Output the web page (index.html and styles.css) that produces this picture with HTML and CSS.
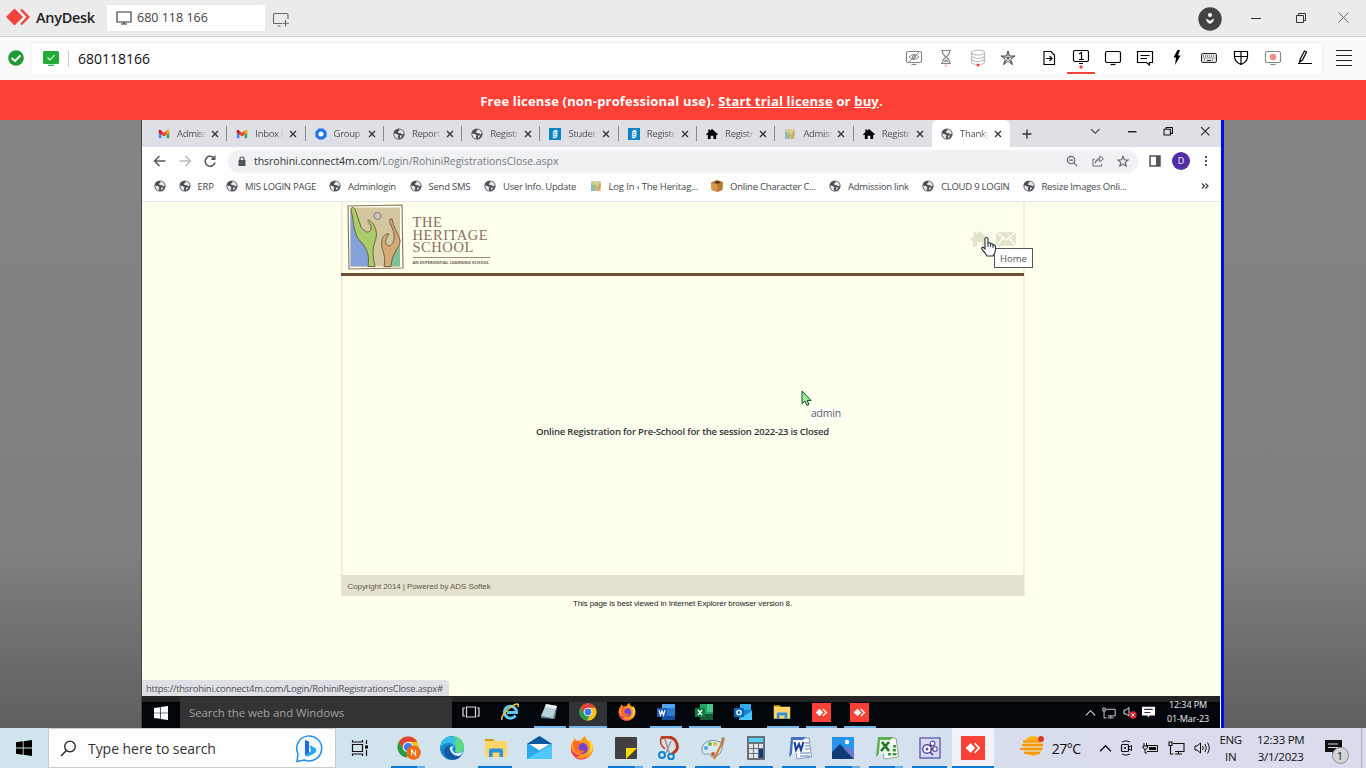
FILE: index.html
```html
<!DOCTYPE html>
<html lang="en">
<head>
<meta charset="utf-8">
<title>AnyDesk</title>
<link rel="stylesheet" href="styles.css">
</head>
<body>
<svg class="defs" width="0" height="0">
<symbol id="globe" viewBox="0 0 12 12"><circle cx="6" cy="6" r="5.600" fill="#4d5156"/><path d="M6.300 1.200C8.800 1.400 10.600 3 10.800 5.200L9.600 6.400 8 5.200 5.600 5 4.800 3.800 6.300 2.800ZM1.200 5.400 3.600 5.900 5.600 7.200 4.800 8.600 5.200 10.700C2.700 10.200 1.100 8 1.200 5.400ZM7.200 7.400 9.400 7.500 8 9.600 6.800 10.200Z" fill="#e6e8eb"/></symbol>
<symbol id="gmail" viewBox="0 0 14 11"><path d="M1 1.500V10.500H4V5Z" fill="#4285f4"/><path d="M13 1.500V10.500H10V5Z" fill="#34a853"/><path d="M1 1.200 2.500.5 7 4 11.500.5 13 1.200V4L7 8.300 1 4Z" fill="#ea4335"/><path d="M10 3 11.500.5 13 1.200V4L10 6.100Z" fill="#fbbc04"/><path d="M1 1.200 2.500.5 4 2V6.100L1 4Z" fill="#c5221f"/></symbol>
<symbol id="house" viewBox="0 0 13 12"><path d="M6.500.5 13 6.300 12 7.400 11 6.500V11.500H8V8H5V11.500H2V6.500L1 7.400 0 6.300 2.500 4V1H4.300V2.500Z"/></symbol>
<symbol id="book" viewBox="0 0 13 13"><path d="M0 0H13V13H0Z" fill="#0b83c5"/><path d="M4 4 6 2H9.500V9.500L7 11.500H4ZM5 5H8M5 7H8M5 9H8" fill="#fff" stroke="#0b83c5" stroke-width=".8"/></symbol>
<symbol id="mini" viewBox="0 0 12 12"><path d="M1 1H11V11H1Z" fill="#d9cfa0"/><path d="M1 3 4 6V11H1Z" fill="#8db6d5"/><path d="M2 1 4 5 6 4 7 7 5.500 11H4Z" fill="#9fc870"/><path d="M9 2 8.500 6 7 7 7.500 11H9L11 5Z" fill="#d7a16d"/></symbol>
<symbol id="tx" viewBox="0 0 8 8"><path d="M1 1 7 7M7 1 1 7" stroke="#33363a" stroke-width="1.400"/></symbol>
<symbol id="chrome" viewBox="0 0 24 24"><circle cx="12" cy="12" r="11.500" fill="#fbc116"/><path d="M2 6.250A11.500 11.500 0 0 1 22 6.250H12L7 15Z" fill="#db4437"/><path d="M2 6.250 7 15 12 17.800 14 17 10.500 23.400A11.500 11.500 0 0 1 2 6.250Z" fill="#269b4b"/><circle cx="12" cy="12" r="5.800" fill="#fff"/><circle cx="12" cy="12" r="4.600" fill="#3b7ded"/></symbol>
<symbol id="firefox" viewBox="0 0 24 24"><path d="M3 5C3.800 3.800 4.500 3 5 2L7 5C8.500 4 10.200 4.200 11 4.500 12 2 14 .5 15.500 0 15 3 18 4 19.500 6 20 5 20 4.500 19.800 4 22 6 23.500 10 23.200 13 22.800 19 18 23.500 12 23.500 5.500 23.500.8 18.500.8 12.500.8 9.500 1.500 7 3 5Z" fill="#ff9a1f"/><path d="M15.500 0C15 3 19 5 20 9 21 13 19 17 17 19 21 17 23 14 23 11 23 8 21 5 19.800 4 20 4.500 20 5 19.500 6 18 4 15 3 15.500 0Z" fill="#ffdc3e"/><path d="M1 11C2 16 6 19 10 19 6 23 2 19 1.200 15ZM3 19C7 23 15 24 20 19 15 25 7 25 3 19Z" fill="#f0306b"/><circle cx="12" cy="12.500" r="5.800" fill="#7542d8"/><path d="M3 5 7 5C9 6 11 7 12 8 9 8 9 9 9 10 7 13 11 16 15 14 13 19 6 19 4 13 3 10 3 7 3 5Z" fill="#ff6d25"/></symbol>
<symbol id="folder" viewBox="0 0 24 20"><path d="M1 1H9L11 3.500H1Z" fill="#d99a12"/><path d="M1 3H23V19H1Z" fill="#ffd469"/><path d="M5 19V12Q5 10.500 6.500 10.500H17.500Q19 10.500 19 12V19H15.500V14.500H8.500V19Z" fill="#2f8fdd"/></symbol>
<symbol id="any" viewBox="0 0 24 24"><path d="M0 0H24V24H0Z" fill="#fb4035"/><path d="M9.500 7.200 14.200 12 9.500 16.800 4.700 12Z" fill="#fff"/><path d="M13 7.800 14.200 6.800 19.400 12 14.200 17.200 13 16.200 17 12Z" fill="#fff"/></symbol>
<symbol id="win" viewBox="0 0 16 16"><path d="M0 2.300 6.800 1.300V7.600H0ZM7.600 1.200 16 0V7.600H7.600ZM0 8.400H6.800V14.700L0 13.700ZM7.600 8.400H16V16L7.600 14.800Z"/></symbol>
<symbol id="net" viewBox="0 0 17 14"><path d="M5 2.500H16V10.500H7M10.500 10.500V13M7 13H14M1 1H4V4.500H1ZM2.500 4.500V13H5.500" fill="none" stroke="currentColor" stroke-width="1.100"/></symbol>
<symbol id="up" viewBox="0 0 12 8"><path d="M1 6.500 6 1.500 11 6.500" fill="none" stroke="currentColor" stroke-width="1.200"/></symbol>
<symbol id="note" viewBox="0 0 17 16"><path d="M0 0H17V12H10L7.500 15V12H0Z" fill="currentColor"/></symbol>
<symbol id="mon" viewBox="0 0 18 16"><rect x="1.500" y="1.500" width="15" height="11" rx="1.500" fill="none" stroke="currentColor" stroke-width="1.200"/><path d="M6.500 14.500H11.500" stroke="currentColor" stroke-width="1.200"/></symbol>
<symbol id="oldx" viewBox="0 0 24 24"><path d="M7 2H21L23.500 21 9 23Z" fill="#fff" stroke="#8fa78f"/><path d="M13 13H16V15.500H13ZM17.500 13H21V15.500H17.500ZM13 17H16V19.500H13ZM17.500 17H21.500V19.500H17.500ZM18 9H21V11.500H18Z" fill="#3c9a3d"/><path d="M3 1H18L15 4H6L4 18 1 21Z" fill="#5cad4d"/><path d="M5 4H16L17 16 4 18Z" fill="#e9f5e6"/><path d="M7 6 14 15M14 6 6 15" stroke="#23752a" stroke-width="2.600"/></symbol>
</svg>

<header class="titlebar">
  <svg class="brand-mark" width="25" height="18" viewBox="0 0 25 18"><path d="M8.500.5 17 9 8.500 17.500 0 9Z" fill="#ef443b"/><path d="M14 2 16 1 24 9 16 17 14 16 20.500 9Z" fill="#ef443b"/></svg>
  <span class="brand">AnyDesk</span>
  <div class="session"><svg width="16" height="14" viewBox="0 0 16 14"><path d="M1 1H15V11H1ZM8 11V13M5 13H11" fill="none" stroke="#333" stroke-width="1.100"/></svg><span>680 118 166</span></div>
  <svg class="newtab" width="18" height="16" viewBox="0 0 18 16"><path d="M10 11.500H2.500Q1.500 11.500 1.500 10.500V2.500Q1.500 1.500 2.500 1.500H14.500Q16 1.500 16 3V7M5.500 14H8.500M13.500 8V14.500M10.300 11.300H16.800" fill="none" stroke="#666" stroke-width="1.100"/></svg>
  <div class="winctl">
    <svg width="24" height="24" viewBox="0 0 24 24"><circle cx="12" cy="12" r="11.700" fill="#444"/><circle cx="12" cy="8" r="2" fill="#fff"/><path d="M8 11.500Q8.500 15.500 12 17 15.500 15.500 16 11.500L12 14Z" fill="#fff"/></svg>
    <svg width="10" height="10" viewBox="0 0 10 10"><path d="M0 5.500H10" stroke="#333"/></svg>
    <svg width="10" height="10" viewBox="0 0 10 10"><path d="M.5 2.500H7.500V9.500H.5ZM2.500 2.500V.5H9.500V7.500H7.500" fill="none" stroke="#333"/></svg>
    <svg width="11" height="11" viewBox="0 0 11 11"><path d="M.5.5 10.500 10.500M10.500.5.5 10.500" stroke="#666"/></svg>
  </div>
</header>

<div class="toolbar">
  <svg class="ok" width="16" height="16" viewBox="0 0 16 16"><circle cx="8" cy="8" r="7.800" fill="#219a35"/><path d="M3.500 8 7 11 12.500 5.500" fill="none" stroke="#fff" stroke-width="2"/></svg>
  <div class="address">
    <svg width="16" height="15" viewBox="0 0 16 15"><rect width="16" height="13" rx="1.500" fill="#20ab37"/><path d="M4.500 6.500 7 9 11.500 4" fill="none" stroke="#fff" stroke-width="1.100"/><path d="M5 14.300H11" stroke="#20ab37" stroke-width="1.200"/></svg>
    <i class="bar"></i><span class="addr-text">680118166</span>
    <div class="tools">
      <span class="dim"><svg width="18" height="16" viewBox="0 0 18 16"><use href="#mon"/><path d="M4 7Q9 2 14 7 9 12 4 7ZM14.500 1.500 4 12" fill="none" stroke="currentColor"/><circle cx="9" cy="7" r="1.500" fill="none" stroke="currentColor"/></svg></span>
      <span class="dim"><svg width="14" height="18" viewBox="0 0 14 18"><path d="M2 1.500H12M2 14.500H12M3.500 2Q3 5 7 8 11 5 10.500 2M3.500 14Q3 11 7 8 11 11 10.500 14M5 13 7 11 9 13" fill="none" stroke="currentColor" stroke-width="1.200"/><circle cx="7" cy="16.500" r="1.500" fill="#fbc8c5"/></svg></span>
      <span class="faint"><svg width="16" height="18" viewBox="0 0 16 18"><g fill="none" stroke="currentColor" stroke-width="1.200"><ellipse cx="8" cy="3.500" rx="6.500" ry="2.500"/><path d="M1.500 3.500V13Q2 15.500 8 15.500T14.500 13V3.500M1.500 7Q3 9.500 8 9.500T14.500 7M1.500 10Q3 12.500 8 12.500T14.500 10"/></g><circle cx="8" cy="16" r="1.500" fill="#f33"/></svg></span>
      <span class="star"><svg width="16" height="16" viewBox="0 0 16 16"><path d="M8 1 9.800 6H15L10.900 9.200 12.500 14.500 8 11.300 3.500 14.500 5.100 9.200 1 6H6.200ZM8 1V8L15 6M8 8 12.500 14.500M8 8 3.500 14.500M8 8 1 6" fill="none" stroke="#555"/></svg></span>
      <span class="file"><svg width="14" height="16" viewBox="0 0 14 16"><path d="M2 1.500H9L12.500 5V14.500H2ZM4 8.500H10M7.500 6 10 8.500 7.500 11" fill="none" stroke="currentColor" stroke-width="1.150"/></svg></span>
      <span class="selected"><svg width="18" height="20" viewBox="0 0 18 20"><rect x="1.500" y="1.500" width="15" height="11" rx="1.500" fill="none" stroke="#000" stroke-width="1.200"/><path d="M7 5 9.500 3.500V10.500M7 10.500H12M7 14.500H11" fill="none" stroke="#000" stroke-width="1.200"/><circle cx="9" cy="18" r="1.700" fill="#ef443b"/></svg></span>
      <span><svg width="18" height="16"><use href="#mon"/></svg></span>
      <span><svg width="18" height="16" viewBox="0 0 18 16"><path d="M1.500 1.500H16.500V12.500H13.500V15L10.500 12.500H1.500ZM4.500 5.500H13.500M4.500 8.500H11" fill="none" stroke="currentColor" stroke-width="1.200"/></svg></span>
      <span><svg width="10" height="17" viewBox="0 0 10 17"><path d="M5.500 1 1.500 8.500H4L3 16 8.500 6.500H6L8 1Z"/></svg></span>
      <span><svg width="16" height="12" viewBox="0 0 16 12"><rect x=".6" y="1.600" width="14.800" height="8.800" rx="1" fill="#eee" stroke="#111"/><path d="M2 4H14M2.500 6H14M3 8H5M11 8H13" stroke="#333" stroke-dasharray="1 1"/><path d="M6 8.500H10" stroke="#222"/></svg></span>
      <span><svg width="16" height="16" viewBox="0 0 16 16"><path d="M1.500 1.500H14.500V7Q14 12 8 14.500 2 12 1.500 7ZM8 1.500V14.500M1.500 6.500H14.500" fill="none" stroke="currentColor" stroke-width="1.200"/></svg></span>
      <span class="dim"><svg width="18" height="16"><use href="#mon"/><circle cx="9" cy="7" r="3.200" fill="#f58a85"/></svg></span>
      <span><svg width="16" height="17" viewBox="0 0 16 17"><path d="M1 14.500H15M2.500 13 3.500 9.500 7.500 2 9.500 3 5.500 11Z" fill="none" stroke="currentColor" stroke-width="1.200"/></svg></span>
    </div>
  </div>
  <svg class="menu" width="16" height="17" viewBox="0 0 16 17"><path d="M0 .5H16M0 5.500H16M0 10.500H16M0 15.500H16" stroke="#222"/></svg>
</div>

<div class="banner">Free license (non-professional use). <a>Start trial license</a> or <a>buy</a>.</div>

<main class="remote">
 <section class="screen">
  <div class="tabs">
    <div class="tab"><svg><use href="#gmail"/></svg><span>Admiss</span><svg class="x"><use href="#tx"/></svg></div>
    <div class="tab"><svg><use href="#gmail"/></svg><span>Inbox (</span><svg class="x"><use href="#tx"/></svg></div>
    <div class="tab"><svg viewBox="0 0 13 13"><path d="M4 .5H9L12.500 4V9L9 12.500H4L.5 9V4Z" fill="#1a73e8"/><circle cx="6.500" cy="6.500" r="2.800" fill="#fff"/></svg><span>Group</span><svg class="x"><use href="#tx"/></svg></div>
    <div class="tab"><svg><use href="#globe"/></svg><span>Report</span><svg class="x"><use href="#tx"/></svg></div>
    <div class="tab"><svg><use href="#globe"/></svg><span>Registr</span><svg class="x"><use href="#tx"/></svg></div>
    <div class="tab"><svg><use href="#book"/></svg><span>Studen</span><svg class="x"><use href="#tx"/></svg></div>
    <div class="tab"><svg><use href="#book"/></svg><span>Registr</span><svg class="x"><use href="#tx"/></svg></div>
    <div class="tab"><svg><use href="#house"/></svg><span>Registr</span><svg class="x"><use href="#tx"/></svg></div>
    <div class="tab"><svg><use href="#mini"/></svg><span>Admiss</span><svg class="x"><use href="#tx"/></svg></div>
    <div class="tab last"><svg><use href="#house"/></svg><span>Registr</span><svg class="x"><use href="#tx"/></svg></div>
    <div class="tab active"><svg><use href="#globe"/></svg><span>Thanky</span><svg class="x"><use href="#tx"/></svg></div>
    <svg class="plus" viewBox="0 0 10 10"><path d="M5 .5V9.500M.5 5H9.500" stroke="#333" stroke-width="1.400"/></svg>
    <div class="chromectl">
      <svg viewBox="0 0 10 10"><path d="M1 3 5 7 9 3" fill="none" stroke="#333"/></svg>
      <svg viewBox="0 0 10 10"><path d="M1 5.500H9" stroke="#000" stroke-width="1.200"/></svg>
      <svg viewBox="0 0 10 10"><path d="M1 3H7V8.500H1ZM3 3V1.500H9V7H7" fill="none" stroke="#111" stroke-width="1"/></svg>
      <svg viewBox="0 0 10 10"><path d="M1 1 9 9M9 1 1 9" stroke="#222"/></svg>
    </div>
  </div>
  <div class="urlbar">
    <svg viewBox="0 0 14 14"><path d="M12.500 7H2M6.500 2 1.500 7 6.500 12" fill="none" stroke="#55585c" stroke-width="1.500"/></svg>
    <svg viewBox="0 0 14 14"><path d="M1.500 7H12M7.500 2 12.500 7 7.500 12" fill="none" stroke="#b8babd" stroke-width="1.500"/></svg>
    <svg viewBox="0 0 14 14"><path d="M11.200 4.200A5 5 0 1 0 12 8.500" fill="none" stroke="#55585c" stroke-width="1.600"/><path d="M12.500 1V6H7.500Z" fill="#55585c"/></svg>
    <div class="omni">
      <svg width="8" height="10" viewBox="0 0 8 10"><path d="M.5 4H7.500V10H.5Z" fill="#505357"/><path d="M2 4V2.500Q2 1 4 1T6 2.500V4" fill="none" stroke="#505357" stroke-width="1.200"/></svg>
      <span class="url"><b>thsrohini.connect4m.com</b>/Login/RohiniRegistrationsClose.aspx</span>
      <div class="omni-icons">
      <svg viewBox="0 0 13 13"><circle cx="5.500" cy="5.500" r="4" fill="none" stroke="#5f6368" stroke-width="1.200"/><path d="M8.500 8.500 12 12M3.500 5.500H7.500" stroke="#5f6368" stroke-width="1.300"/></svg>
      <svg viewBox="0 0 13 13"><path d="M3 4.500H1V12H10.500V9.500M3.500 9Q4 5 8.500 5V7.500L12.500 4 8.500 1V3.500Q4 4 3.500 9Z" fill="none" stroke="#5f6368"/></svg>
      <svg viewBox="0 0 13 13"><path d="M6.500 1.500 8 5.200 12 5.500 9 8 10 12 6.500 9.800 3 12 4 8 1 5.500 5 5.200Z" fill="none" stroke="#5f6368" stroke-width="1.200"/></svg>
      </div>
    </div>
    <div class="ext">
    <svg width="12" height="12" viewBox="0 0 12 12"><path d="M1 1H11V11H1Z" fill="none" stroke="#505357" stroke-width="1.500"/><path d="M7 1H11V11H7Z" fill="#505357"/></svg>
    <span class="avatar">D</span>
    <svg width="4" height="12" viewBox="0 0 4 12"><path d="M1 1H3V3H1ZM1 5H3V7H1ZM1 9H3V11H1Z" fill="#505357"/></svg>
    </div>
  </div>
  <nav class="bookmarks">
    <span class="bm w0"><svg><use href="#globe"/></svg></span>
    <span class="bm w1"><svg><use href="#globe"/></svg>ERP</span>
    <span class="bm w2"><svg><use href="#globe"/></svg>MIS LOGIN PAGE</span>
    <span class="bm w3"><svg><use href="#globe"/></svg>Adminlogin</span>
    <span class="bm w4"><svg><use href="#globe"/></svg>Send SMS</span>
    <span class="bm w5"><svg><use href="#globe"/></svg>User Info. Update</span>
    <span class="bm w6"><svg><use href="#mini"/></svg>Log In ‹ The Heritag...</span>
    <span class="bm w7"><svg viewBox="0 0 12 12"><path d="M0 2.500 6 0 12 2 11.500 10 6.500 12 .5 10Z" fill="#b77a34"/><path d="M0 2.500 6.500 4.500 6.500 12 .5 10Z" fill="#d79a4d"/><path d="M3 2.300 6.500 1 10 2.200 6.500 3.700Z" fill="#553012"/></svg>Online Character C...</span>
    <span class="bm w8"><svg><use href="#globe"/></svg>Admission link</span>
    <span class="bm w9"><svg><use href="#globe"/></svg>CLOUD 9 LOGIN</span>
    <span class="bm w10"><svg><use href="#globe"/></svg>Resize Images Onli...</span>
    <svg class="more" viewBox="0 0 8 8"><path d="M1 1.500 3.500 4 1 6.500M4.500 1.500 7 4 4.500 6.500" fill="none" stroke="#333" stroke-width="1.100"/></svg>
  </nav>
  <div class="page">
    <div class="sheet">
      <div class="head">
        <svg width="57" height="66" viewBox="0 0 57 66"><path d="M1 2 55 1 56 64 2 65Z" fill="#fffef0" stroke="#8b7058" stroke-width="1.100"/><path d="M3.500 3.500H53V62.500H3.500Z" fill="#d3c7a0"/><path d="M3.500 5 14 36 21 44V62.500H3.500Z" fill="#84a1d9"/><path d="M53 41 43 52 44 62.500H53Z" fill="#82c098"/><path d="M4 6C4 2 8 3 9 8L14 23C18 29 24 30 24 24 25 21 20 18 21 16 26 17 31 27 29 34 27 42 24 45 28 62.500H21C23 50 19 43 13 37 6 30 7 16 4 6Z" fill="#a9cd6b" stroke="#765f3e"/><path d="M45 15C46 22 51 30 53 36 54 43 45 47 44 62.500H37C40 50 33 46 35 36 36 32 39 29 42 30 37 36 38 41 42 42 46 41 48 36 47 30 46 23 41 18 43 15Z" fill="#d4aa76" stroke="#765f3e"/><circle cx="30.500" cy="12" r="3.500" fill="#c5c5c8" stroke="#8c7c70"/></svg>
        <div class="school"><div>THE</div><div>HERITAGE</div><div>SCHOOL</div><small>AN EXPERIENTIAL LEARNING SCHOOL</small></div>
        <div class="links">
          <svg width="19" height="18" viewBox="0 0 13 12"><use href="#house" fill="#e4e3d0"/></svg>
          <svg width="20" height="14" viewBox="0 0 20 14"><path d="M0 0H20V14H0Z" fill="#e4e3d0"/><path d="M0 0 10 8 20 0M0 14 7 6M20 14 13 6" fill="none" stroke="#fffff0" stroke-width="1.300"/></svg>
        </div>
      </div>
      <div class="body">Online Registration for Pre-School for the session 2022-23 is Closed</div>
      <div class="foot">Copyright 2014 | Powered by ADS Softek</div>
    </div>
    <p class="best">This page is best viewed in Internet Explorer browser version 8.</p>
    <span class="tip">Home</span>
    <svg class="hand" width="16" height="21" viewBox="0 0 16 21"><path d="M4 13V2.500Q5.500 0 7 2.500V7Q9 6 9.500 8 11.500 7 12 9 14 8.500 14.500 10.500V14Q14 18 12 20H6Q4.500 17 1 13.500 0 11 2.500 11.500Z" fill="#fff" stroke="#25333c" stroke-width="1.100"/><path d="M7 7V11M9.500 8V11M12 9V12" stroke="#25333c"/></svg>
    <svg class="arrow" width="12" height="17" viewBox="0 0 12 17"><path d="M1 1V13.500L4 11 6 15.500 8 14.500 6.200 10.500H10Z" fill="#9bf09b" stroke="#174c2a"/></svg>
    <span class="admin">admin</span>
    <span class="status">https://thsrohini.connect4m.com/Login/RohiniRegistrationsClose.aspx#</span>
  </div>
  <div class="rtask">
    <div class="rstart"><svg width="14" height="14" fill="#fff"><use href="#win"/></svg></div>
    <div class="rsearch">Search the web and Windows</div>
    <div class="rapps">
      <span><svg viewBox="0 0 18 18"><path d="M4.500 4H13.500V14H4.500ZM3 5H1V13H3M15 5H17V13H15" fill="none" stroke="#ddd" stroke-width="1.200"/></svg></span>
      <span><svg viewBox="0 0 18 18"><path d="M14.500 12.500A6 6 0 1 1 15.500 9.500H6" fill="none" stroke="#5cc8f5" stroke-width="3"/><path d="M1 17C-1 13 10 2 16 1 18 1 17.500 3 17 4" fill="none" stroke="#eec43b" stroke-width="1.500"/></svg></span>
      <span class="on"><svg viewBox="0 0 18 18"><path d="M6 1 17 3 13 16 1 13Z" fill="#b5d3d9"/><path d="M6 1 17 3 16 6 5 4Z" fill="#e7eef0"/><path d="M17 3 15 16 1 15 1 13 13 15Z" fill="#67858c"/></svg></span>
      <span class="on full"><svg><use href="#chrome"/></svg></span>
      <span><svg><use href="#firefox"/></svg></span>
      <span class="on"><svg viewBox="0 0 18 18"><path d="M5 1H18V17H5Z" fill="#2b7cd3"/><path d="M5 1H18V5H5Z" fill="#55a5ed"/><path d="M5 13H18V17H5Z" fill="#174a9c"/><path d="M0 5H10V14H0Z" fill="#1c58b8"/><path d="M2 7 3.500 12 5 8 6.500 12 8 7" fill="none" stroke="#fff" stroke-width="1.200"/></svg></span>
      <span class="on"><svg viewBox="0 0 18 18"><path d="M5 1H18V17H5Z" fill="#21a366"/><path d="M12 1H18V9H12Z" fill="#4bc58a"/><path d="M5 11H18V17H5Z" fill="#185c37"/><path d="M0 5H10V14H0Z" fill="#107c41"/><path d="M3 7 7 12M7 7 3 12" stroke="#fff" stroke-width="1.300"/></svg></span>
      <span><svg viewBox="0 0 18 18"><path d="M6 1H17V9H6Z" fill="#32a9e9"/><path d="M5 7H18V17H5Z" fill="#1685d5"/><path d="M5 16 18 8V17H5Z" fill="#48c6f5"/><path d="M0 5H10V14H0Z" fill="#0969b9"/><circle cx="5" cy="9.500" r="2.200" fill="none" stroke="#fff" stroke-width="1.300"/></svg></span>
      <span class="on"><svg><use href="#folder"/></svg></span>
      <span class="on"><svg class="big"><use href="#any"/></svg></span>
      <span class="on"><svg class="big"><use href="#any"/></svg></span>
    </div>
    <div class="rtray">
      <svg width="11" height="8"><use href="#up"/></svg>
      <svg width="14" height="12"><use href="#net"/></svg>
      <svg width="14" height="13" viewBox="0 0 14 13"><path d="M1 4H3L6 1.500V10L3 8H1Z" fill="none" stroke="#ddd"/><circle cx="10" cy="9" r="3.700" fill="#d8252e"/><path d="M8.500 7.500 11.500 10.500M11.500 7.500 8.500 10.500" stroke="#fff"/></svg>
      <svg width="13" height="13" viewBox="0 0 17 16"><use href="#note" color="#fff"/><path d="M3 4H14M3 8H11" stroke="#333" stroke-width="1.500"/></svg>
    </div>
    <div class="rclock">12:34 PM<br>01-Mar-23</div>
  </div>
 </section>
</main>

<footer class="taskbar">
  <div class="start"><svg width="16" height="16"><use href="#win"/></svg></div>
  <div class="search"><svg width="17" height="17" viewBox="0 0 17 17"><circle cx="10" cy="6.500" r="5.300" fill="none" stroke="#222" stroke-width="1.300"/><path d="M6.300 10.500 1 16" stroke="#222" stroke-width="1.300"/></svg><span>Type here to search</span>
    <svg class="bing" width="29" height="29" viewBox="0 0 29 29"><path d="M2 27.500 3 20A12.500 12.500 0 1 1 9.500 26Z" fill="#f5faff" stroke="#258ee0" stroke-width="1.500"/><path d="M10 6 14 7.500V19L10 21.500Z" fill="#1a6bea"/><path d="M14.500 11 21 14.500Q22 18 19 19.500L13 22.500 10 21.500 16 17Z" fill="#28a6ee"/></svg></div>
  <div class="view"><svg width="18" height="18" viewBox="0 0 18 18"><path d="M1.500 5.500H11.500V12.500H1.500ZM1.500 1V3H11.500V1M1.500 17V15H11.500V17M15.500 1V5M15.500 11V17" fill="none" stroke="#111" stroke-width="1.200"/><path d="M14 6.500H17V9.500H14Z"/></svg></div>
  <div class="apps">
    <span class="on part"><svg viewBox="0 0 26 26"><use href="#chrome" width="24" height="24"/><circle cx="18" cy="18" r="7.800" fill="#ef6c13"/><path d="M15.800 21V15L20.200 21V15" fill="none" stroke="#fff" stroke-width="1.100"/></svg></span>
    <span><svg viewBox="0 0 24 24"><circle cx="12" cy="12" r="12" fill="#1687cf"/><path d="M1 8C4-2 20-2 23.500 9 25 15 19 18 15 16 17 11 13 7 8 7 4 7 1 10 0 13Z" fill="#37bde5"/><path d="M12 0C20 0 25 7 24 12 23 17 18 17 15 16 17 12 16 9 14 8 18 4 14 1 12 0Z" fill="#5edc83"/><path d="M10 9C8 13 11 20 21 20 17 25 9 25 5 20 2 15 5 10 10 9Z" fill="#1459a4"/><path d="M15 10C12 11 11 14 15 17 18 18 22 16 23 15 22 18 21 19 19 20 13 20 9 15 10 11Z" fill="#e1edf4"/></svg></span>
    <span class="on"><svg><use href="#folder"/></svg></span>
    <span><svg class="wide" viewBox="0 0 25 24"><path d="M0 8 12.500 0 25 8V23H0Z" fill="#29a8ec"/><path d="M0 23 25 8V23Z" fill="#50c9fa"/><path d="M0 8 12.500 0 25 8Z" fill="#0c579e"/><path d="M2.500 8H22.500L12.500 14.500Z" fill="#fff"/></svg></span>
    <span><svg><use href="#firefox"/></svg></span>
    <span class="on part"><svg viewBox="0 0 24 24"><rect x="1" y="1" width="22" height="22" rx="1" fill="#414141"/><path d="M12 12H23L12 23Z" fill="#ffda00"/></svg></span>
    <span class="on"><svg viewBox="0 0 24 24"><path d="M4 1 18 3Q24 12 16 18L11 15 5 9Z" fill="#dae1e3"/><path d="M4 2Q13-1 18 4 24 13 15 18" fill="none" stroke="#bd3a20" stroke-width="3"/><path d="M4 2Q2 8 8 13" fill="none" stroke="#bd3a20" stroke-width="1.500"/><path d="M8 3 12 17M14 5 9 17" stroke="#8e989c" stroke-width="1.500"/><circle cx="5" cy="19" r="3" fill="none" stroke="#1781c9" stroke-width="2"/><circle cx="14" cy="20.500" r="2.800" fill="none" stroke="#1781c9" stroke-width="2"/></svg></span>
    <span class="on"><svg viewBox="0 0 24 24"><path d="M1 15C0 6 10 2 19 6 24 10 20 20 13 21 8 22 10 16 6 18 3 19 2 18 1 15Z" fill="#d8e9ef" stroke="#77939e"/><circle cx="5" cy="12" r="2" fill="#47a7dc"/><circle cx="9" cy="8" r="2" fill="#68b64a"/><circle cx="14" cy="8" r="2" fill="#e6c22c"/><circle cx="12" cy="18" r="2" fill="#d55043"/><path d="M13 23 20 9" stroke="#d67a24" stroke-width="2"/><path d="M19 9 21 1 24 2 22 10Z" fill="#b78655"/></svg></span>
    <span class="on"><svg viewBox="0 0 24 24"><path d="M3 0H21V24H3Z" fill="#68717a"/><path d="M5 2H19V6H5Z" fill="#55d2fa"/><path d="M5 8H9V12H5ZM10 8H14V12H10ZM15 8H19V12H15ZM5 13H9V17H5ZM10 13H14V17H10ZM5 18H9V22H5ZM10 18H14V22H10Z" fill="#e1e5e8"/><path d="M15 13H19V22H15Z" fill="#123c78"/></svg></span>
    <span class="on"><svg viewBox="0 0 24 24"><path d="M7 2H21L23.500 21 9 23Z" fill="#fff" stroke="#8394bb"/><path d="M17 7H21M17 10H21.500M17 13H21.500M12 17H22M12 20H22" stroke="#5573b5" stroke-width="1.200"/><path d="M3 1H18L15 4H6L4 18 1 21Z" fill="#4a72bb"/><path d="M5 4H16L17 16 4 18Z" fill="#edf2fb"/><path d="M6.500 6 8 14 11 8 13 14 15.500 6" fill="none" stroke="#1b3e94" stroke-width="2"/></svg></span>
    <span class="on part"><svg viewBox="0 0 24 24"><path d="M1 1H23V23H1Z" fill="#2795ed"/><path d="M1 16 9 8 23 23H1Z" fill="#123c78"/><path d="M13 13 17 10 23 15V23Z" fill="#6a79d5"/><circle cx="16" cy="6" r="2.200" fill="#fff"/></svg></span>
    <span class="on part"><svg><use href="#oldx"/></svg></span>
    <span class="on"><svg viewBox="0 0 24 24"><path d="M2 2H22V22H2Z" fill="#d9d9f1" stroke="#6a66b5" stroke-width="1.500"/><circle cx="9" cy="13" r="4.300" fill="#fff" stroke="#5650a9" stroke-width="1.600"/><circle cx="9" cy="13" r="1.500" fill="#5650a9"/><circle cx="14.500" cy="7.500" r="2.300" fill="#fff" stroke="#5c57ad" stroke-width="1.300"/><circle cx="17" cy="13" r="2.300" fill="#fff" stroke="#5c57ad" stroke-width="1.300"/><path d="M12 10 13.500 9M13 13H15M12 16 15 19" stroke="#443a8c" stroke-width="1.500"/></svg></span>
    <span class="on current"><svg><use href="#any"/></svg></span>
  </div>
  <div class="weather"><svg width="25" height="23" viewBox="0 0 25 23"><circle cx="13" cy="11" r="10" fill="#ffb319"/><path d="M2 8H22M1 12H23M3 16H21" stroke="#d9e0ed" stroke-width="1"/><path d="M3 6.500H20M2 10H23M0 14H22M4 18H20" stroke="#f7960c" stroke-width="2"/><circle cx="21" cy="4" r="3" fill="#d83b2d"/></svg><span>27°C</span></div>
  <div class="tray">
    <svg width="13" height="9"><use href="#up"/></svg>
    <svg width="13" height="16" viewBox="0 0 13 16"><rect x="1.500" y="4.500" width="7" height="7" rx="1" fill="none" stroke="#111" stroke-width="1.200"/><path d="M9 7 11.500 5.500V10.500L9 9M2 2Q6-.5 10 2M2 14Q6 16.500 10 14" fill="none" stroke="#111"/><circle cx="5" cy="8" r="1"/></svg>
    <svg width="17" height="12" viewBox="0 0 17 12"><path d="M5 3.500H15.500V9.500H5M2 1V4M4.500 1V4M1 4H5.500V6Q3 9 1 6ZM3 7V11H5" fill="none" stroke="#111"/><path d="M7 5H14V8H7Z"/></svg>
    <svg width="17" height="14"><use href="#net"/></svg>
    <svg width="17" height="14" viewBox="0 0 17 14"><path d="M1 5H3L6.500 2V12L3 9H1ZM8.500 5Q10 7 8.500 9M11 3Q13.500 7 11 11M13.500 1.500Q17 7 13.500 12.500" fill="none" stroke="#111"/></svg>
  </div>
  <div class="lang">ENG<br>IN</div>
  <div class="clock">12:33 PM<br>3/1/2023</div>
  <div class="notif"><svg width="24" height="25" viewBox="0 0 24 25"><use href="#note" width="17" height="16"/><path d="M3 4H13M3 7.500H13" stroke="#dde" stroke-width="1.200"/><circle cx="15.500" cy="15.500" r="8" fill="#d3d3d8" stroke="#8b8b90"/></svg><b>1</b></div>
</footer>
</body>
</html>
```
FILE: styles.css
```css
* { box-sizing: border-box; }
body { margin: 0; width: 1366px; height: 768px; overflow: hidden; font-family: "Open Sans", "Noto Sans", sans-serif; color: #222; display: flex; flex-direction: column; }
svg { display: block; flex: none; }
.defs { position: absolute; }

.titlebar { height: 37px; background: #ebebeb; border-bottom: 1px solid #d0d0d0; display: flex; align-items: center; padding-left: 6px; }
.brand { width: 71px; margin: -2px 0 0 5px; font-size: 14.500px; font-weight: 600; letter-spacing: -.3px; white-space: nowrap; }
.brand-mark { margin-bottom: 2px; }
.session { width: 158px; height: 26px; border-radius: 2px; background: #fff; display: flex; align-items: center; padding-left: 9px; gap: 5px; font-size: 12.500px; color: #444; }
.session span { margin-top: -2px; }
.newtab { margin: 3px 0 0 7px; }
.winctl { margin-left: auto; display: flex; align-items: center; padding-right: 17px; }
.winctl svg + svg { margin: -1px 0 0 34px; }
.winctl svg:first-child { margin-top: 2px; }
.winctl svg:nth-child(2) { margin-left: 29px; }
.winctl svg:nth-child(3) { margin-left: 35px; }
.winctl svg:nth-child(4) { margin-left: 32px; }

.toolbar { height: 43px; background: #fafafa; display: flex; align-items: center; padding-left: 8px; }
.ok { margin-top: -1px; }
.address { margin-left: 8px; width: 1290px; height: 32px; background: #fff; box-shadow: 0 0 0 1.500px #f4f4f4; display: flex; align-items: center; padding-left: 11px; border-radius: 2px; }
.bar { width: 1px; height: 16px; background: #ccc; margin: 0 9px 0 9px; }
.addr-text { font-size: 14px; letter-spacing: 0; color: #111; }
.tools { margin-left: auto; margin-right: 1px; display: flex; align-items: center; color: #000; height: 32px; }
.tools span { width: 32px; height: 32px; display: flex; align-items: center; justify-content: center; padding-bottom: 2px; }
.tools .dim { color: #888; }
.tools .faint { color: #bbb; }
.tools .star { width: 28px; }
.tools .file { margin-left: 11px; }
.tools .selected { border-bottom: 2px solid #ef443b; width: 28px; margin: -1px 2px 0; padding: 4px 0 0; }
.menu { margin-left: 14px; }

.banner { height: 40px; background: #fe4137; color: #fff; font-weight: 700; font-size: 13px; line-height: 42px; text-align: center; letter-spacing: .175px; padding-right: 3px; }
.banner a { text-decoration: underline; }

.remote { height: 608px; background: linear-gradient(#858585, #808080 70%, #5f5f5f); padding-left: 141px; }
.screen { width: 1083px; height: 608px; border-left: 1px solid #444; border-right: 3px solid #0808f0; display: flex; flex-direction: column; background: #fff; }
.tabs { height: 27px; background: #dee0e6; display: flex; padding-left: 7px; }
.tab { width: 78.300px; flex: none; display: flex; align-items: center; padding-left: 9px; position: relative; font-size: 9.500px; color: #505358; border-radius: 6px 6px 0 0; letter-spacing: -.3px; }
.tab::after { content: ""; position: absolute; right: 0; top: 6px; width: 1px; height: 15px; background: #85878c; }
.tab.active::after, .tab.last::after { display: none; }
.tab svg { width: 12px; height: 12px; }
.tab span { width: 29px; margin: -1px 5px 0 7px; overflow: hidden; white-space: nowrap; -webkit-mask-image: linear-gradient(90deg, #000 75%, transparent); mask-image: linear-gradient(90deg, #000 75%, transparent); }
.tab .x { width: 8px; height: 8px; }
.tab.active { background: #fff; }
.plus { width: 10px; height: 10px; margin: 9px 0 0 12px; }
.chromectl { margin-left: auto; display: flex; gap: 26px; padding: 6px 11px 0 0; }
.chromectl svg { width: 10.500px; height: 10.500px; }

.urlbar { height: 29px; display: flex; align-items: center; padding: 0 0 1px 11px; gap: 11px; }
.urlbar > svg { width: 14px; height: 14px; }
.omni { width: 910px; height: 23px; border-radius: 12px; background: #eff1f3; display: flex; align-items: center; padding-left: 10px; }
.url { margin-left: 8px; font-size: 10.500px; color: #777a7f; letter-spacing: -.03px; white-space: nowrap; }
.url b { color: #303236; font-weight: 400; }
.omni-icons { margin-left: auto; display: flex; gap: 13.500px; padding-right: 9px; }
.omni-icons svg { width: 12px; height: 12px; }
.ext { display: flex; align-items: center; gap: 11px; }
.avatar { width: 18px; height: 18px; border-radius: 50%; background: #512da8; color: #fff; font-size: 9px; line-height: 18px; text-align: center; }
.ext svg:last-child { margin-left: 3px; }

.bookmarks { height: 26px; border-bottom: 1px solid #e5e5e2; display: flex; align-items: center; padding: 0 0 5px 11.500px; }
.bm { display: flex; align-items: center; gap: 7px; font-size: 9.500px; color: #45484c; white-space: nowrap; letter-spacing: -.24px; flex: none; }
.bm svg { width: 12px; height: 12px; }
.w0 { width: 25px; } .w1 { width: 47.500px; } .w2 { width: 103px; } .w3 { width: 80.500px; } .w4 { width: 74.500px; } .w5 { width: 105.500px; letter-spacing: -.29px; } .w6 { width: 121.500px; letter-spacing: -.16px; } .w7 { width: 118px; } .w8 { width: 93px; } .w9 { width: 100.500px; } .w10 { width: 105px; }
.more { width: 8px; height: 8px; margin-left: auto; margin-right: 12px; }

.page { height: 494px; background: #ffffee; position: relative; }
.sheet { width: 684px; margin-left: 198.500px; border: solid #efeed6; border-width: 0 2px; }
.head { height: 74px; border-bottom: 3px solid #6a5035; display: flex; padding: 2px 6px 0 6px; margin-left: -2px; margin-right: -1px; }
.school { margin-left: 9px; padding-top: 12px; font-family: "Liberation Serif", serif; font-size: 14.500px; line-height: 12.700px; color: #876f60; }
.school div { letter-spacing: .55px; }
.school small { display: block; width: 77px; border-top: 1px solid #a08b7a; margin-top: 3px; font: 700 4.150px/9px "Open Sans", sans-serif; white-space: nowrap; color: #6c6056; }
.links { margin-left: auto; display: flex; align-items: center; gap: 7px; padding: 0 2px 0 0; }
.body { height: 299px; display: flex; align-items: center; justify-content: center; font-size: 9.500px; font-weight: 600; padding-top: 11px; color: #333; white-space: nowrap; letter-spacing: -.19px; }
.foot { height: 21px; margin-left: -2px; margin-right: -1px; background: #e4e2cf; font: 8px/23px "Liberation Sans", sans-serif; padding-left: 7px; color: #635a48; letter-spacing: -.08px; }
.best { margin: 3px 0 0; width: 1081px; text-align: center; font: 8px/10px "Liberation Sans", sans-serif; color: #222; letter-spacing: -.09px; }
.tip { position: absolute; left: 852px; top: 46px; width: 39px; height: 20px; border: 1px solid #555; background: #fff; font-size: 9.500px; line-height: 19px; text-align: center; color: #555; }
.hand { position: absolute; left: 839px; top: 34px; }
.arrow { position: absolute; left: 659px; top: 188px; }
.admin { position: absolute; left: 668px; top: 205px; width: 32px; height: 13px; background: #fffffa; font-size: 10.500px; line-height: 13px; color: #635d70; padding-left: 1px; letter-spacing: -.25px; }
.status { position: absolute; left: 0; bottom: -1px; width: 307px; height: 17px; background: #dee0e6; border-radius: 0 4px 0 0; font-size: 9.500px; line-height: 17px; padding-left: 4px; white-space: nowrap; color: #505358; letter-spacing: -.275px; }

.rtask { height: 32px; background: #03060b; border-top: 6px solid #262424; display: flex; margin-right: 1px; color: #ddd; position: relative; }
.rstart { width: 38px; display: flex; align-items: center; justify-content: center; padding-bottom: 5px; }
.rsearch { width: 272px; margin-top: -5px; background: #333; font-size: 11.500px; line-height: 31px; padding-left: 9px; color: #a0a0a0; letter-spacing: -.1px; }
.rapps { display: flex; }
.rapps span { width: 38.850px; display: flex; align-items: center; justify-content: center; position: relative; height: 26px; padding-bottom: 6px; }
.rapps svg { width: 18px; height: 18px; }
.rapps svg.big { width: 19px; height: 19px; }
.rapps .on::after { content: ""; position: absolute; bottom: 0; left: 4px; right: 3px; height: 2px; background: #76b5e5; }
.rapps .full { background: #303338; }
.rapps .full::after { left: 0; right: 0; }
.rtray { margin-left: auto; display: flex; align-items: center; gap: 6.500px; padding-bottom: 5px; margin-right: 6px; }
.rtray svg:nth-child(4) { margin-left: -1px; }
.rclock { width: 54px; font-size: 9px; line-height: 13.500px; text-align: center; margin-top: -4px; margin-right: 5px; letter-spacing: -.1px; color: #eee; white-space: nowrap; }

.taskbar { height: 40px; background: linear-gradient(90deg, #cfe5ee, #d2e4ef 50%, #d8dcec 80%, #dadcec); display: flex; color: #111; }
.start { width: 48px; display: flex; align-items: center; justify-content: center; }
.search { width: 288px; background: #fff; border: 1px solid #c8cdd0; display: flex; align-items: center; padding-left: 11px; font-size: 14px; letter-spacing: -.05px; color: #333; }
.search span { margin-left: 11px; white-space: nowrap; }
.bing { margin-left: auto; margin-right: 11px; }
.view { width: 51px; display: flex; align-items: center; padding-left: 15px; }
.apps { display: flex; }
.apps span { width: 43.450px; height: 40px; display: flex; align-items: center; justify-content: center; position: relative; }
.apps svg { width: 24px; height: 24px; }
.apps svg.wide { width: 25px; }
.apps .on::after { content: ""; position: absolute; left: 4px; right: 5px; bottom: 0; height: 2px; background: #0a7ad8; }
.apps .part::after { background: linear-gradient(90deg, #0a7ad8 76%, #65ade5 76%); }
.apps .current { background: #f1f2f9; width: 42px; margin-left: 0; }
.apps .current::after { left: 0; right: 0; }
.weather { width: 62px; margin-left: 26px; display: flex; align-items: center; gap: 7px; font-size: 14px; letter-spacing: -.5px; }
.weather svg { margin-top: -4px; }
.tray { display: flex; align-items: center; justify-content: space-between; width: 112px; margin-left: 17px; }
.lang { width: 26px; margin-left: 7px; text-align: center; font-size: 11.500px; line-height: 17px; padding-top: 3px; letter-spacing: -.3px; }
.clock { width: 60px; margin-left: 7px; text-align: center; font-size: 11.500px; line-height: 17px; padding-top: 3px; letter-spacing: -.25px; white-space: nowrap; }
.notif { margin-left: 14px; padding-top: 12px; position: relative; width: 37px; border-right: 1px solid #b0b4c0; }
.notif b { position: absolute; left: 12px; top: 20px; font-size: 11px; line-height: 15px; font-weight: 400; }
```
